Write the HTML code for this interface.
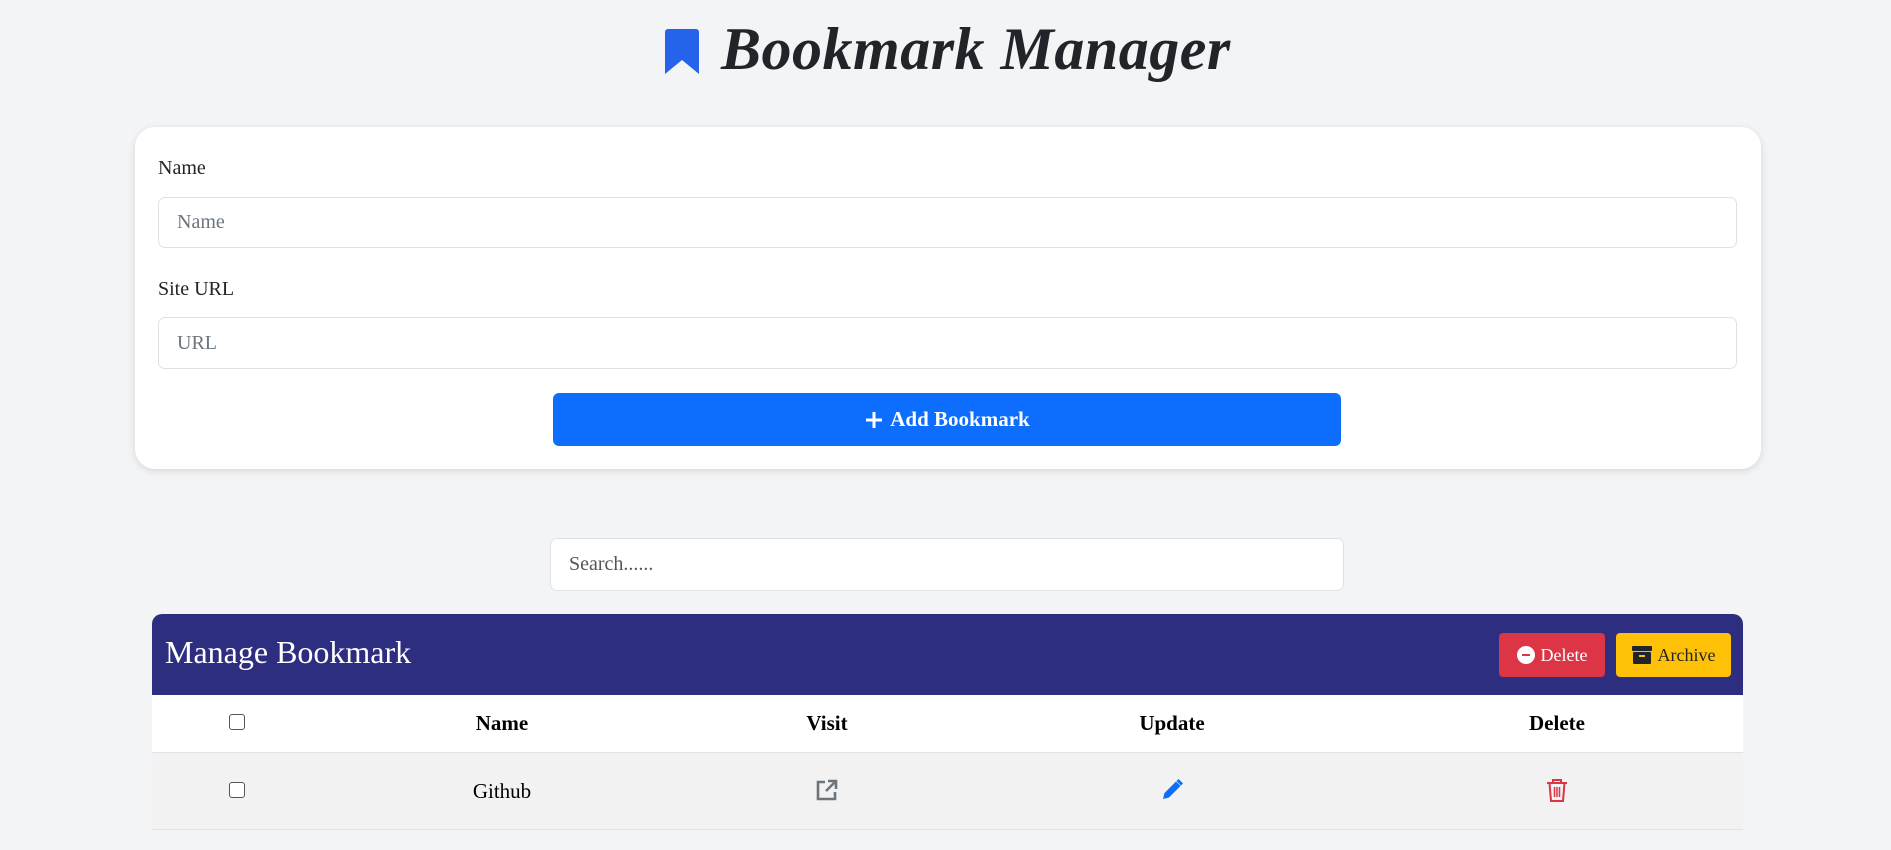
<!DOCTYPE html>
<html><head><style>
*{box-sizing:border-box;margin:0;padding:0}
body{width:1891px;height:850px;background:#f3f4f6;font-family:"Liberation Serif",serif;color:#212529;position:relative;overflow:hidden}
.abs{position:absolute}
h1{position:absolute;left:721px;top:13px;font-size:60px;font-style:italic;font-weight:bold;line-height:72px;color:#212529;letter-spacing:0.5px}
.card{left:135px;top:127px;width:1626px;height:342px;background:#fff;border-radius:20px;box-shadow:0 2px 8px rgba(0,0,0,.12)}
.lbl{font-size:20px;color:#212529}
.inp{background:#fff;border:1px solid #dee2e6;border-radius:7px;font-size:20px;color:#6c757d;padding-left:18px;display:flex;align-items:center}
.btn{left:553px;top:393px;width:788px;height:53px;background:#0d6efd;border-radius:6px;color:#fff;font-weight:bold;font-size:21px;display:flex;align-items:center;justify-content:center}
.thead{left:152px;top:614px;width:1591px;height:81px;background:#2e2e80;border-radius:10px 10px 0 0}
.cb{width:16px;height:16px;border:1.5px solid #555;border-radius:3px;background:#fff}
.th{font-weight:bold;font-size:21px;color:#000;transform:translateX(-50%)}
</style></head><body>
<svg class="abs" style="left:665px;top:29px" width="34" height="46" viewBox="0 0 34 46"><path d="M3 0H31A3 3 0 0 1 34 3V45L17 31L0 45V3A3 3 0 0 1 3 0Z" fill="#2563eb"/></svg>
<h1>Bookmark Manager</h1>
<div class="abs card"></div>
<div class="abs lbl" style="left:158px;top:157px">Name</div>
<div class="abs inp" style="left:158px;top:197px;width:1579px;height:51px">Name</div>
<div class="abs lbl" style="left:158px;top:278px">Site URL</div>
<div class="abs inp" style="left:158px;top:317px;width:1579px;height:52px">URL</div>
<div class="abs btn"><svg width="20" height="20" viewBox="0 0 20 20" style="margin-right:6px"><path d="M10 2V18M2 10H18" stroke="#fff" stroke-width="3"/></svg>Add Bookmark</div>
<div class="abs inp" style="left:550px;top:538px;width:794px;height:53px;color:#555">Search......</div>
<div class="abs thead"></div>
<div class="abs" style="left:165px;top:634px;font-size:32px;color:#fff">Manage Bookmark</div>
<div class="abs" style="left:1499px;top:633px;width:106px;height:44px;background:#dc3545;border-radius:4px;color:#fff;font-size:18px;display:flex;align-items:center;justify-content:center;gap:6px"><span style="width:18px;height:18px;border-radius:50%;background:#fff;display:inline-flex;align-items:center;justify-content:center"><span style="width:8px;height:2px;background:#dc3545"></span></span>Delete</div>
<div class="abs" style="left:1616px;top:633px;width:115px;height:44px;background:#ffc107;border-radius:4px;color:#212529;font-size:18px;display:flex;align-items:center;justify-content:center;gap:6px"><svg width="20" height="18" viewBox="0 0 20 18"><rect x="0" y="0" width="20" height="5" rx="1" fill="#212529"/><rect x="1" y="6" width="18" height="12" rx="1" fill="#212529"/><rect x="7" y="9" width="6" height="2" fill="#ffc107"/></svg>Archive</div>
<div class="abs" style="left:152px;top:695px;width:1591px;height:58px;background:#fff;border-bottom:1px solid #dee2e6"></div>
<div class="abs" style="left:152px;top:753px;width:1591px;height:77px;background:#f2f2f2;border-bottom:1px solid #dee2e6"></div>
<div class="abs cb" style="left:229px;top:714px"></div>
<div class="abs th" style="left:502px;top:711px">Name</div>
<div class="abs th" style="left:827px;top:711px">Visit</div>
<div class="abs th" style="left:1172px;top:711px">Update</div>
<div class="abs th" style="left:1557px;top:711px">Delete</div>
<div class="abs cb" style="left:229px;top:782px"></div>
<div class="abs" style="left:502px;top:779px;font-size:21px;color:#000;transform:translateX(-50%)">Github</div>
<svg class="abs" style="left:815px;top:778px" width="24" height="24" viewBox="0 0 24 24" fill="none" stroke="#6c757d" stroke-width="2.6"><path d="M10 4H3V21H20V14"/><path d="M13 3H21V11M21 3L11 13"/></svg>
<svg class="abs" style="left:1160px;top:778px" width="24" height="24" viewBox="0 0 24 24"><path d="M3 21L4.5 15L16 3.5L20.5 8L9 19.5Z" fill="#0d6efd"/><path d="M17.5 2L22 6.5" stroke="#0d6efd" stroke-width="3"/></svg>
<svg class="abs" style="left:1546px;top:778px" width="22" height="25" viewBox="0 0 22 25" fill="none" stroke="#dc3545" stroke-width="2"><path d="M1 5H21M7 5V2H15V5"/><path d="M3.5 5L5 23H17L18.5 5"/><path d="M8.5 9V19M11 9V19M13.5 9V19" stroke-width="1.5"/></svg>
</body></html>
